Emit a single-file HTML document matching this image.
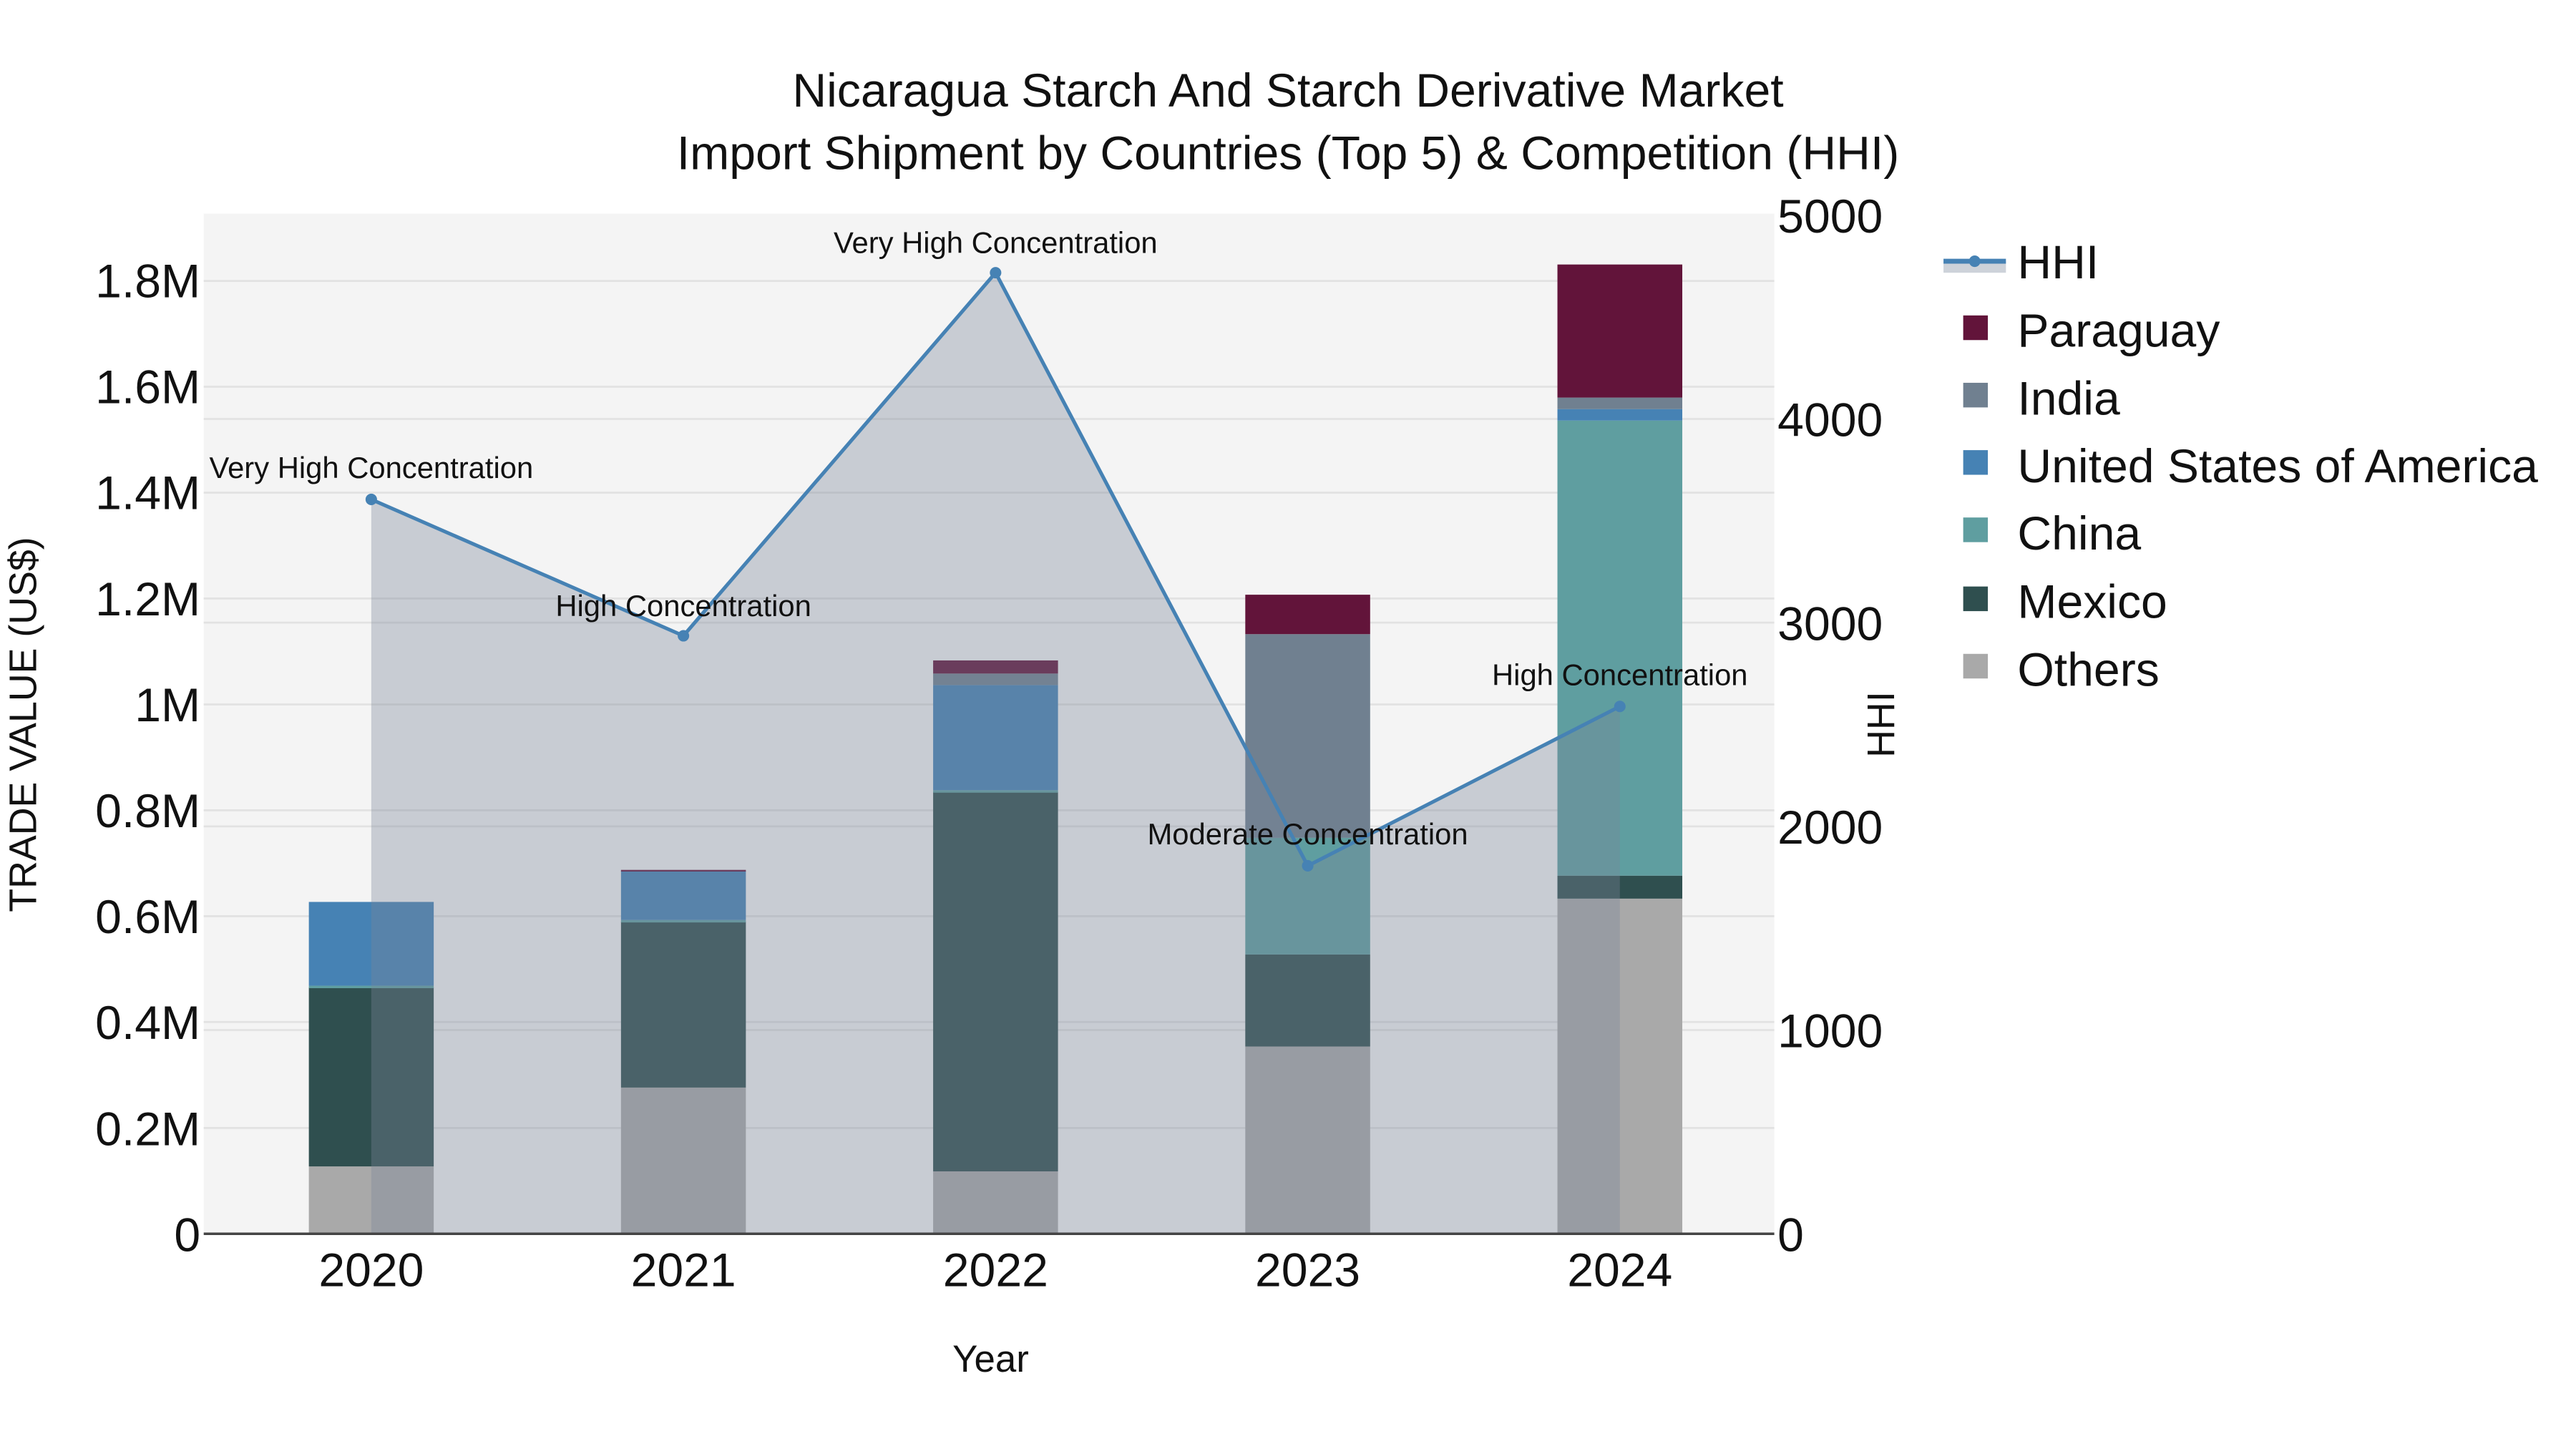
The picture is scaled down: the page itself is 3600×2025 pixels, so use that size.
<!DOCTYPE html>
<html><head><meta charset="utf-8"><style>
html,body{margin:0;padding:0;background:#fff;}
svg{display:block;}
text{font-family:"Liberation Sans",sans-serif;fill:#111;}
</style></head><body>
<svg width="3600" height="2025" viewBox="0 0 1568 882" xmlns="http://www.w3.org/2000/svg">
<rect x="0" y="0" width="1568" height="882" fill="#fff"/>
<rect x="124" y="130" width="956" height="621" fill="#f4f4f4"/>
<g stroke="#e2e2e2" stroke-width="1.2">
<line x1="124" x2="1080" y1="686.6" y2="686.6"/><line x1="124" x2="1080" y1="622.1" y2="622.1"/>
<line x1="124" x2="1080" y1="557.7" y2="557.7"/><line x1="124" x2="1080" y1="493.2" y2="493.2"/>
<line x1="124" x2="1080" y1="428.8" y2="428.8"/><line x1="124" x2="1080" y1="364.3" y2="364.3"/>
<line x1="124" x2="1080" y1="299.9" y2="299.9"/><line x1="124" x2="1080" y1="235.4" y2="235.4"/>
<line x1="124" x2="1080" y1="171" y2="171"/>
<line x1="124" x2="1080" y1="627" y2="627"/><line x1="124" x2="1080" y1="503" y2="503"/>
<line x1="124" x2="1080" y1="379" y2="379"/><line x1="124" x2="1080" y1="255" y2="255"/>
</g>
<g>
<rect x="188" y="710" width="76" height="41" fill="#a9a9a9"/>
<rect x="188" y="601" width="76" height="109" fill="#2f4f4f"/>
<rect x="188" y="600" width="76" height="1.5" fill="#5f9ea0"/>
<rect x="188" y="549" width="76" height="51" fill="#4682b4"/>

<rect x="378" y="662" width="76" height="89" fill="#a9a9a9"/>
<rect x="378" y="561" width="76" height="101" fill="#2f4f4f"/>
<rect x="378" y="560" width="76" height="1.5" fill="#5f9ea0"/>
<rect x="378" y="530" width="76" height="30" fill="#4682b4"/>
<rect x="378" y="529.5" width="76" height="1" fill="#62143a"/>

<rect x="568" y="713" width="76" height="38" fill="#a9a9a9"/>
<rect x="568" y="482" width="76" height="231" fill="#2f4f4f"/>
<rect x="568" y="481" width="76" height="1.5" fill="#5f9ea0"/>
<rect x="568" y="417" width="76" height="64" fill="#4682b4"/>
<rect x="568" y="410" width="76" height="7" fill="#708090"/>
<rect x="568" y="402" width="76" height="8" fill="#62143a"/>

<rect x="758" y="637" width="76" height="114" fill="#a9a9a9"/>
<rect x="758" y="581" width="76" height="56" fill="#2f4f4f"/>
<rect x="758" y="510" width="76" height="71" fill="#5f9ea0"/>
<rect x="758" y="386" width="76" height="124" fill="#708090"/>
<rect x="758" y="362" width="76" height="24" fill="#62143a"/>

<rect x="948" y="547" width="76" height="204" fill="#a9a9a9"/>
<rect x="948" y="533" width="76" height="14" fill="#2f4f4f"/>
<rect x="948" y="256" width="76" height="277" fill="#5f9ea0"/>
<rect x="948" y="249" width="76" height="7" fill="#4682b4"/>
<rect x="948" y="242" width="76" height="7" fill="#708090"/>
<rect x="948" y="161" width="76" height="81" fill="#62143a"/>
</g>
<polygon points="226,751 226,304 416,387 606,166 796,527 986,430 986,751" fill="rgba(122,133,152,0.36)"/>
<line x1="124" x2="1080" y1="751" y2="751" stroke="#444" stroke-width="1.5"/>
<polyline points="226,304 416,387 606,166 796,527 986,430" fill="none" stroke="#4682b4" stroke-width="2.2"/>
<g fill="#4682b4">
<circle cx="226" cy="304" r="3.5"/><circle cx="416" cy="387" r="3.5"/><circle cx="606" cy="166" r="3.5"/>
<circle cx="796" cy="527" r="3.5"/><circle cx="986" cy="430" r="3.5"/>
</g>
<g font-size="18.2" text-anchor="middle">
<text x="226" y="291">Very High Concentration</text>
<text x="416" y="375">High Concentration</text>
<text x="606" y="154">Very High Concentration</text>
<text x="796" y="514">Moderate Concentration</text>
<text x="986" y="417">High Concentration</text>
</g>
<g font-size="28.8" text-anchor="middle">
<text x="784" y="65">Nicaragua Starch And Starch Derivative Market</text>
<text x="784" y="103">Import Shipment by Countries (Top 5) &amp; Competition (HHI)</text>
</g>
<g font-size="28.8" text-anchor="end">
<text x="122" y="761.5">0</text>
<text x="122" y="697">0.2M</text>
<text x="122" y="632.5">0.4M</text>
<text x="122" y="568">0.6M</text>
<text x="122" y="503.5">0.8M</text>
<text x="122" y="439">1M</text>
<text x="122" y="374.5">1.2M</text>
<text x="122" y="310">1.4M</text>
<text x="122" y="245.5">1.6M</text>
<text x="122" y="181">1.8M</text>
</g>
<g font-size="28.8" text-anchor="start">
<text x="1082" y="761.5">0</text>
<text x="1082" y="637.5">1000</text>
<text x="1082" y="513.5">2000</text>
<text x="1082" y="389.5">3000</text>
<text x="1082" y="265.5">4000</text>
<text x="1082" y="141.5">5000</text>
</g>
<g font-size="28.8" text-anchor="middle">
<text x="226" y="783">2020</text>
<text x="416" y="783">2021</text>
<text x="606" y="783">2022</text>
<text x="796" y="783">2023</text>
<text x="986" y="783">2024</text>
</g>
<text x="603" y="835" font-size="23" text-anchor="middle">Year</text>
<text transform="translate(22,441) rotate(-90)" font-size="23.4" text-anchor="middle">TRADE VALUE (US$)</text>
<text transform="translate(1153,441) rotate(-90)" font-size="23.4" text-anchor="middle">HHI</text>
<rect x="1183" y="159" width="38" height="7" fill="#cdd2d9"/>
<line x1="1183" x2="1221" y1="159" y2="159" stroke="#4682b4" stroke-width="3"/>
<circle cx="1202" cy="159" r="3.5" fill="#4682b4"/>
<g font-size="28.8">
<text x="1228" y="169.5">HHI</text>
<text x="1228" y="211">Paraguay</text>
<text x="1228" y="252.5">India</text>
<text x="1228" y="293.5">United States of America</text>
<text x="1228" y="334.5">China</text>
<text x="1228" y="376">Mexico</text>
<text x="1228" y="417.5">Others</text>
</g>
<rect x="1195" y="192" width="15" height="15" fill="#62143a"/>
<rect x="1195" y="233" width="15" height="15" fill="#708090"/>
<rect x="1195" y="274" width="15" height="15" fill="#4682b4"/>
<rect x="1195" y="315" width="15" height="15" fill="#5f9ea0"/>
<rect x="1195" y="357" width="15" height="15" fill="#2f4f4f"/>
<rect x="1195" y="398" width="15" height="15" fill="#a9a9a9"/>
</svg>
</body></html>
